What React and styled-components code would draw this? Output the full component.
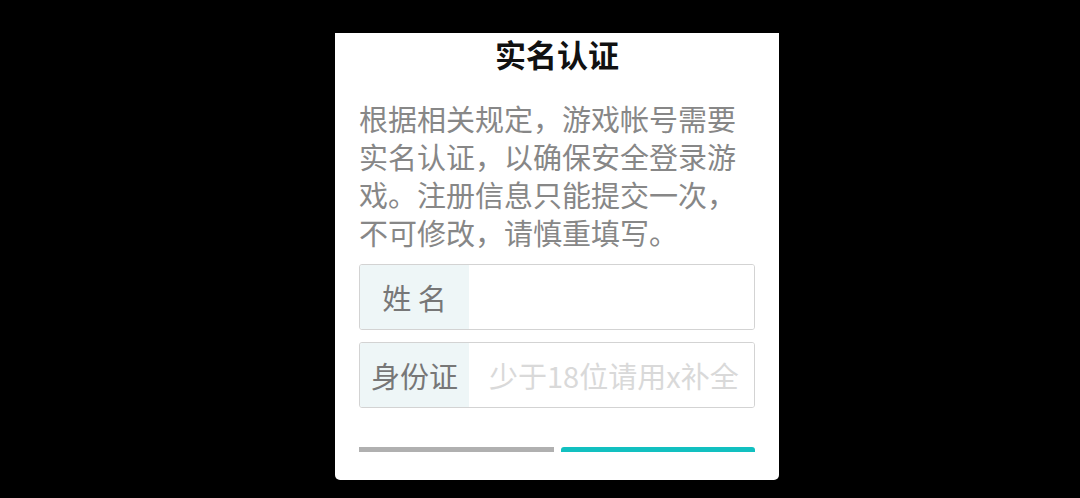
import styled, { createGlobalStyle } from 'styled-components';

const GlobalStyle = createGlobalStyle`
  html, body {
    margin: 0;
    padding: 0;
    background: #000;
  }
  body {
    font-family: "Noto Sans CJK SC", "Noto Sans", sans-serif;
  }
`;

const Screen = styled.div`
  width: 1080px;
  height: 498px;
  background: #000;
  display: flex;
  justify-content: center;
  padding-top: 33px;
  box-sizing: border-box;
  overflow: hidden;
`;

const Card = styled.div`
  width: 444px;
  height: 447px;
  box-sizing: border-box;
  background: #fff;
  border-radius: 0 0 5px 5px;
  padding: 0 24px;
  display: flex;
  flex-direction: column;
  margin-left: 34px;
`;

const Title = styled.h1`
  margin: 0;
  font-size: 31px;
  line-height: 42px;
  font-weight: 700;
  color: #111;
  text-align: center;
`;

const Notice = styled.p`
  margin: 24px 0 0;
  font-size: 29px;
  line-height: 38px;
  color: #878787;
`;

const Form = styled.div`
  margin-top: 13px;
  display: flex;
  flex-direction: column;
  gap: 12px;
`;

const Field = styled.label`
  display: flex;
  height: 66px;
  box-sizing: border-box;
  border: 1px solid #d3d3d3;
  border-radius: 3px;
  overflow: hidden;
`;

const FieldLabel = styled.span`
  width: 109px;
  flex-shrink: 0;
  background: #eef6f7;
  display: flex;
  align-items: center;
  justify-content: center;
  font-size: 29px;
  color: #777;
  white-space: pre;
`;

const FieldInput = styled.input`
  flex: 1;
  min-width: 0;
  border: none;
  outline: none;
  background: #fff;
  padding: 0 0 0 20px;
  font-family: "Noto Sans CJK SC", "Noto Sans", sans-serif;
  font-size: 29px;
  color: #555;

  &::placeholder {
    color: #d9d9d9;
  }
`;

const Actions = styled.div`
  margin-top: 39px;
  display: flex;
  gap: 7px;
`;

const ActionBar = styled.button`
  flex: 1;
  height: 5px;
  padding: 0;
  border: none;
  background: ${p => (p.$primary ? '#12c0c0' : '#b0b0b0')};
  border-radius: ${p => (p.$primary ? '3px 3px 0 0' : '0')};
`;

export default function App() {
  return (
    <>
      <GlobalStyle />
      <Screen>
        <Card>
          <Title>实名认证</Title>
          <Notice>
            根据相关规定，游戏帐号需要实名认证，以确保安全登录游戏。注册信息只能提交一次，不可修改，请慎重填写。
          </Notice>
          <Form>
            <Field>
              <FieldLabel>姓 名</FieldLabel>
              <FieldInput type="text" />
            </Field>
            <Field>
              <FieldLabel>身份证</FieldLabel>
              <FieldInput type="text" placeholder="少于18位请用x补全" />
            </Field>
          </Form>
          <Actions>
            <ActionBar />
            <ActionBar $primary />
          </Actions>
        </Card>
      </Screen>
    </>
  );
}
